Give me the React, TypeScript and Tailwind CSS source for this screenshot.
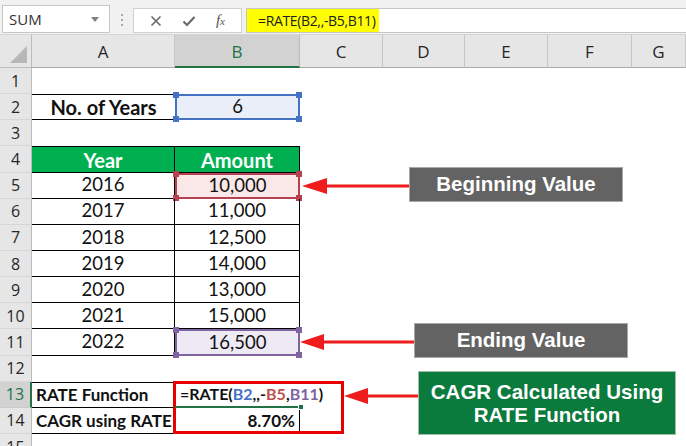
import type { ReactNode } from 'react';

const cols = ['A', 'B', 'C', 'D', 'E', 'F', 'G'];
const uiFont = { fontFamily: '"Open Sans", "Noto Sans", sans-serif' };
const cellFont = { fontFamily: 'Lato, "Liberation Sans", sans-serif' };
const boxFont = { fontFamily: '"Liberation Sans", Arial, sans-serif' };

function Handle({ pos, color }: { pos: string; color: string }) {
  return <span className={`absolute h-[6px] w-[6px] ${pos} ${color}`} />;
}

function Corners({ color }: { color: string }) {
  return (
    <>
      <Handle pos="-left-[4px] -top-[4px]" color={color} />
      <Handle pos="-right-[4px] -top-[4px]" color={color} />
      <Handle pos="-left-[4px] -bottom-[4px]" color={color} />
      <Handle pos="-right-[4px] -bottom-[4px]" color={color} />
    </>
  );
}

function RowHead({ n, active }: { n: number; active?: boolean }) {
  return (
    <div
      style={uiFont}
      className={
        active
          ? 'flex items-center justify-center border-b border-r-2 border-b-[#c9c9c9] border-r-[#217346] bg-[#d2d2d2] text-[16px] text-[#217346]'
          : 'flex items-center justify-center border-b border-r border-b-[#d6d6d6] border-r-[#bcbcbc] bg-[#e6e6e6] text-[16px] text-[#262626]'
      }
    >
      {n}
    </div>
  );
}

function Empty({ count = 5 }: { count?: number }) {
  return (
    <>
      {Array.from({ length: count }).map((_, i) => (
        <div key={i} />
      ))}
    </>
  );
}

function Cell({ className = '', children }: { className?: string; children?: ReactNode }) {
  return (
    <div style={cellFont} className={`relative flex items-center text-[#111] ${className}`}>
      {children}
    </div>
  );
}

const years: [string, string][] = [
  ['2016', '10,000'],
  ['2017', '11,000'],
  ['2018', '12,500'],
  ['2019', '14,000'],
  ['2020', '13,000'],
  ['2021', '15,000'],
  ['2022', '16,500'],
];

export default function App() {
  return (
    <div className="relative h-[446px] w-[686px] overflow-hidden bg-white">
      {/* formula bar */}
      <div className="flex h-[35px] items-end border-b border-[#d4d4d4] bg-[#f1f1f1] pb-[1px] pl-[2px]">
        <div
          style={uiFont}
          className="relative flex h-[28px] w-[108px] items-center border border-[#c6c6c6] bg-white pl-[6px] text-[15px] text-[#333]"
        >
          SUM
          <span className="absolute left-[88px] top-[11px] h-0 w-0 border-x-[4px] border-t-[5px] border-x-transparent border-t-[#808080]" />
        </div>
        <div className="flex h-[26px] w-[23px] flex-col items-center justify-center gap-[3px]">
          <span className="h-[2px] w-[2px] bg-[#a8a8a8]" />
          <span className="h-[2px] w-[2px] bg-[#a8a8a8]" />
          <span className="h-[2px] w-[2px] bg-[#a8a8a8]" />
        </div>
        <div className="flex h-[25px] w-[109px] items-center justify-around border border-[#d0d0d0] bg-white px-[6px]">
          <svg width="12" height="12" viewBox="0 0 12 12">
            <path d="M1.5 1.5 L10.5 10.5 M10.5 1.5 L1.5 10.5" stroke="#6a6a6a" strokeWidth="1.6" />
          </svg>
          <svg width="14" height="12" viewBox="0 0 14 12">
            <path d="M1.5 6.5 L5 10 L12.5 2" stroke="#6a6a6a" strokeWidth="2.2" fill="none" />
          </svg>
          <span style={{ fontFamily: '"Liberation Serif", serif' }} className="text-[15px] italic text-[#555]">
            f<span className="text-[11px]">x</span>
          </span>
        </div>
        <div className="ml-[4px] flex h-[25px] flex-1 items-center border-y border-l border-[#c6c6c6] bg-white">
          <div
            style={uiFont}
            className="flex h-full w-[132px] items-center whitespace-nowrap bg-[#ffff00] pl-[11px] text-[14px] tracking-[-0.35px] text-[#222]"
          >
            =RATE(B2,,-B5,B11)
          </div>
        </div>
      </div>

      {/* sheet */}
      <div className="grid grid-cols-[32px_143px_125px_83px_82px_83px_84px_54px] grid-rows-[33px_repeat(15,26.15px)]">
        <div className="relative border-b border-r border-[#bcbcbc] bg-[#e6e6e6]">
          <span className="absolute bottom-[4px] right-[4px] h-0 w-0 border-b-[17px] border-l-[17px] border-b-[#b7b7b7] border-l-transparent" />
        </div>
        {cols.map((c) => (
          <div
            key={c}
            style={uiFont}
            className={
              c === 'B'
                ? 'flex items-center justify-center border-b-2 border-r border-b-[#217346] border-r-[#bcbcbc] bg-[#d2d2d2] pt-[2px] text-[17px] text-[#217346]'
                : 'flex items-center justify-center border-b border-r border-b-[#ababab] border-r-[#c6c6c6] bg-[#e6e6e6] pt-[2px] text-[17px] text-[#262626]'
            }
          >
            {c}
          </div>
        ))}

        {/* row 1 */}
        <RowHead n={1} />
        <Empty count={7} />

        {/* row 2 */}
        <RowHead n={2} />
        <Cell className="justify-center border-y border-black text-[20px] font-bold">No. of Years</Cell>
        <Cell className="justify-center border-2 border-[#4472c4] bg-[#e9eef8] text-[18.5px]">
          6
          <Corners color="bg-[#4472c4]" />
        </Cell>
        <Empty />

        {/* row 3 */}
        <RowHead n={3} />
        <Empty count={7} />

        {/* row 4 */}
        <RowHead n={4} />
        <Cell className="justify-center border-y border-r border-black bg-[#00b050] text-[20px] font-bold">
          <span className="text-white">Year</span>
        </Cell>
        <Cell className="justify-center border-y border-r border-black bg-[#00b050] text-[20px] font-bold">
          <span className="text-white">Amount</span>
        </Cell>
        <Empty />

        {years.map(([y, v], i) => {
          const row = i + 5;
          let bCls = 'justify-center border-b border-r border-black text-[18.5px]';
          let corners: ReactNode = null;
          if (row === 5) {
            bCls = 'justify-center border-2 border-[#b5424e] bg-[#fae8e8] text-[18.5px]';
            corners = <Corners color="bg-[#b5424e]" />;
          }
          if (row === 11) {
            bCls = 'justify-center border-2 border-[#8064a2] bg-[#eeeaf5] text-[18.5px]';
            corners = <Corners color="bg-[#8064a2]" />;
          }
          return (
            <div key={y} className="contents">
              <RowHead n={row} />
              <Cell className="justify-center border-b border-r border-black text-[18.5px]">{y}</Cell>
              <Cell className={bCls}>
                {v}
                {corners}
              </Cell>
              <Empty />
            </div>
          );
        })}

        {/* row 12 */}
        <RowHead n={12} />
        <Empty count={7} />

        {/* row 13 */}
        <RowHead n={13} active />
        <Cell className="border-y border-r border-black pl-[4px] text-[17px] font-bold">RATE Function</Cell>
        <Cell className="z-10 whitespace-nowrap border-b-2 border-[#217346] pl-[5px] text-[16px] font-bold">
          =RATE(<span className="text-[#4472c4]">B2</span>,,-<span className="text-[#c0504d]">B5</span>,
          <span className="text-[#8064a2]">B11</span>)
          <span className="absolute -bottom-[4px] -right-[4px] h-[6px] w-[6px] border border-white bg-[#217346]" />
        </Cell>
        <Empty />

        {/* row 14 */}
        <RowHead n={14} />
        <Cell className="border-b border-r border-black pl-[4px] text-[17px] font-bold">CAGR using RATE</Cell>
        <Cell className="justify-end border-b border-r border-black pr-[4px] text-[17px] font-bold">8.70%</Cell>
        <Empty />

        {/* row 15 */}
        <RowHead n={15} />
        <Empty count={7} />
      </div>

      {/* callouts */}
      <div className="absolute left-[173px] top-[381px] h-[53px] w-[171px] border-[3px] border-[#e60000]" />

      <svg className="pointer-events-none absolute left-0 top-0" width="686" height="446">
        <g fill="#ee1c1c" stroke="#ee1c1c">
          <line x1="410" y1="186" x2="322" y2="186" strokeWidth="3" />
          <polygon points="302,186 327,178 327,194" stroke="none" />
          <line x1="414" y1="342" x2="318" y2="342" strokeWidth="3" />
          <polygon points="300,342 324,334 324,350" stroke="none" />
          <line x1="418" y1="396" x2="362" y2="396" strokeWidth="3" />
          <polygon points="344,396 368,388 368,404" stroke="none" />
        </g>
      </svg>

      <div
        style={boxFont}
        className="absolute left-[409px] top-[167px] flex h-[35px] w-[214px] items-center justify-center border border-[#a9a9a9] bg-[#636363] text-[20.5px] font-bold text-white"
      >
        Beginning Value
      </div>
      <div
        style={boxFont}
        className="absolute left-[414px] top-[323px] flex h-[35px] w-[214px] items-center justify-center border border-[#a9a9a9] bg-[#636363] text-[20.5px] font-bold text-white"
      >
        Ending Value
      </div>
      <div
        style={boxFont}
        className="absolute left-[418px] top-[371px] flex h-[64px] w-[258px] flex-col items-center justify-center border border-[#9fbfa9] bg-[#0b7a3d] text-[20.5px] font-bold leading-[23px] text-white"
      >
        <span>CAGR Calculated Using</span>
        <span>RATE Function</span>
      </div>
    </div>
  );
}
